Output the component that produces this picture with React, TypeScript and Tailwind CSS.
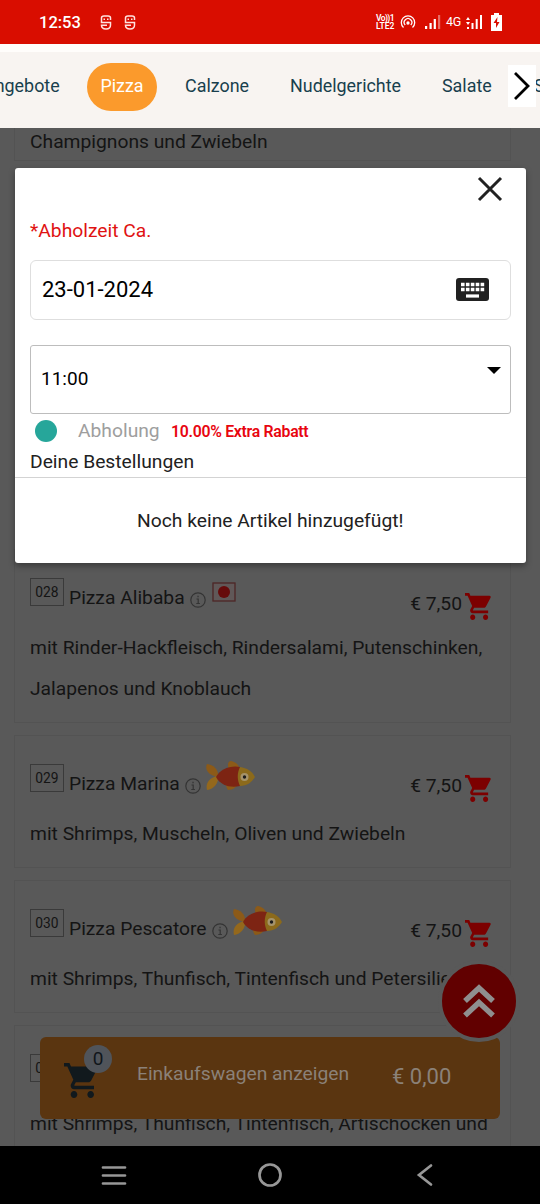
import React from 'react';

type Pizza = {
  number: string;
  name: string;
  price: string;
  description: string[];
  icon: 'flag' | 'fish';
};

const pizzas: Pizza[] = [
  {
    number: '028',
    name: 'Pizza Alibaba',
    price: '€ 7,50',
    description: ['mit Rinder-Hackfleisch, Rindersalami, Putenschinken,', 'Jalapenos und Knoblauch'],
    icon: 'flag',
  },
  {
    number: '029',
    name: 'Pizza Marina',
    price: '€ 7,50',
    description: ['mit Shrimps, Muscheln, Oliven und Zwiebeln'],
    icon: 'fish',
  },
  {
    number: '030',
    name: 'Pizza Pescatore',
    price: '€ 7,50',
    description: ['mit Shrimps, Thunfisch, Tintenfisch und Petersilie'],
    icon: 'fish',
  },
  {
    number: '031',
    name: '',
    price: '',
    description: ['mit Shrimps, Thunfisch, Tintenfisch, Artischocken und'],
    icon: 'fish',
  },
];

const CartIcon = ({ className }: { className: string }) => (
  <svg viewBox="1 2 21 20" className={className} fill="currentColor" preserveAspectRatio="none">
    <path d="M7 18c-1.1 0-1.99.9-1.99 2S5.9 22 7 22s2-.9 2-2-.9-2-2-2zM1 2v2h2l3.6 7.59-1.35 2.45c-.16.28-.25.61-.25.96 0 1.1.9 2 2 2h12v-2H7.42c-.14 0-.25-.11-.25-.25l.03-.12.9-1.63h7.45c.75 0 1.41-.41 1.75-1.03l3.58-6.49A1 1 0 0 0 20 4H5.21l-.94-2H1zm16 16c-1.1 0-1.99.9-1.99 2s.89 2 1.99 2 2-.9 2-2-.9-2-2-2z" />
  </svg>
);

const InfoIcon = () => (
  <svg viewBox="0 0 16 16" className="h-4 w-4" fill="none" stroke="#343434" strokeWidth="1.2">
    <circle cx="8" cy="8" r="7.2" />
    <path d="M6.500 7h1.700v4.300M6.300 11.500h3.600" />
    <path d="M7.400 4.500h1.300" strokeWidth="1.5" />
  </svg>
);

const FishIcon = () => (
  <svg viewBox="0 0 50 32" className="h-8 w-[50px]">
    <path d="M24 9C22 5 23 1 26 1c5 1 8 4 9 9z" fill="#8c5a18" />
    <path d="M13 17C5 16-1 10 2 4c7 1 12 6 11 13z" fill="#8c5a18" />
    <path d="M13 16C5 17 0 23 2 30c7-1 12-7 11-14z" fill="#94681c" />
    <path d="M21 24c0 3 1 5 2 6 5 0 8-3 10-6z" fill="#8c5a18" />
    <path d="M11 17C15 9 26 5 35 7v19c-9 2-19 0-24-9z" fill="#7d2413" />
    <path d="M35 7c7 1 12 4 15 10-3 5-8 9-15 9-3-6-3-13 0-19z" fill="#8c6a1b" />
    <circle cx="39.5" cy="17" r="4" fill="#a5936b" />
    <circle cx="39.5" cy="17" r="1.700" fill="#1c1c1c" />
  </svg>
);

const FlagIcon = () => (
  <svg viewBox="0 0 24 20" className="h-5 w-6">
    <rect x="1" y="1" width="22" height="18" fill="#605858" stroke="#4d2626" strokeWidth="1.3" />
    <circle cx="12" cy="10" r="6" fill="#660b0b" />
  </svg>
);

const StatusBar = () => (
  <div className="flex h-11 items-center bg-[#d90d00] pl-[39px] text-white">
    <span className="w-[61px] pt-0.5 text-[16.5px] font-medium">12:53</span>
    {[0, 1].map((item) => (
      <svg key={item} viewBox="0 0 12 15" className="mr-3 h-[15px] w-3" fill="none" stroke="#ffe3df" strokeWidth="1.5">
        <path d="M10.500 5V3Q10.500 1 8 1H4Q1.500 1 1.500 3v4.500H10.500V10Q10.500 14 6 14 1.500 14 1.500 10.300H7" />
        <path d="M3.500 4.300h1.500M7 4.300h1.500" />
      </svg>
    ))}
    <div className="ml-auto flex h-5 items-center pr-[38px]">
      <div className="w-[20px] text-[8.5px] leading-[8px] font-semibold">
        <div className="tracking-[-0.6px]">Vo))1</div>
        <div>LTE2</div>
      </div>
      <svg viewBox="0 0 16 14" className="ml-[4px] h-[14px] w-4" fill="none" stroke="white" strokeWidth="1.3">
        <path d="M3.500 12.500A6.700 6.700 0 1 1 12.500 12.500M5.200 10A3.800 3.800 0 1 1 10.800 10" />
        <circle cx="8" cy="8" r="1" fill="white" />
      </svg>
      <svg viewBox="0 0 16 14" className="ml-[9px] h-[14px] w-4" fill="white">
        <path d="M0 11h2.200v3H0zM4.500 8h2.200v6H4.500zM8.700 4h2.200v10H8.700z" />
        <path d="M13 0h2.200v14H13z" opacity=".4" />
      </svg>
      <span className="ml-[5px] w-[16px] pt-px text-[12.5px] tracking-[-0.3px]">4G</span>
      <svg viewBox="0 0 17 14" className="ml-[4px] h-[14px] w-[17px]" fill="white">
        <path d="M0 5l2-3 2 3zM0 7l2 3 2-3zM1 12h2v2H1zM5.500 8h2v6h-2zM9.700 4h2v10h-2zM14 0h2v14h-2z" />
      </svg>
      <svg viewBox="0 0 11 18" className="ml-[8px] h-[18px] w-[11px]">
        <path d="M3 0h5v2h3v16H0V2h3z" fill="white" />
        <path d="M6.500 4L2.500 10h2.500v5L8.500 9H6z" fill="#d90d00" />
      </svg>
    </div>
  </div>
);

const CategoryNav = () => (
  <nav className="relative h-[84px] overflow-hidden border-t-8 border-[#fffdfb] bg-[#f8f4f1] text-[17.9px] text-[#183f4d]">
    <div className="flex h-[69px] w-[640px] items-center whitespace-nowrap">
      <span className="-ml-[17px] w-[76px]">Angebote</span>
      <span className="ml-[28px] flex h-12 w-[70px] items-center justify-center rounded-full bg-[#fb9a2c] text-white">Pizza</span>
      <span className="ml-[28px] w-[105px]">Calzone</span>
      <span className="w-[152px]">Nudelgerichte</span>
      <span className="w-[92px]">Salate</span>
      <span>Suppen</span>
    </div>
    <div className="absolute top-[13px] left-[508px] flex h-[42px] w-7 items-center justify-center bg-white">
      <svg viewBox="0 0 16 30" className="h-[30px] w-4" fill="none" stroke="black" strokeWidth="2.8">
        <path d="M1 2L14 15 1 28" />
      </svg>
    </div>
  </nav>
);

const PizzaCard = ({ pizza }: { pizza: Pizza }) => (
  <div className="mb-3 border border-[#535353] pr-[18px] pb-[13px] pl-[15px]">
    <div className="flex h-[77px] items-start">
      <span className="mt-[28px] flex h-7 w-[34px] items-center justify-center border border-[#3a3a3a] text-[13.8px]">
        {pizza.number}
      </span>
      <span className="mt-[34px] ml-[5px] leading-7">{pizza.name}</span>
      <span className="mt-[42px] ml-[5px]">
        <InfoIcon />
      </span>
      {pizza.icon === 'fish' ? (
        <span className="mt-[24px] ml-[4px]"><FishIcon /></span>
      ) : (
        <span className="mt-[32px] ml-[6px]"><FlagIcon /></span>
      )}
      {/* The flag row pushes the price a little lower */}
      <div className={pizza.icon === 'flag' ? 'mt-[4px] ml-auto flex' : 'ml-auto flex'}>
        <span className="mt-[36px] leading-7">{pizza.price}</span>
        <CartIcon className="mt-[39px] ml-[3px] h-[27px] w-[27px] text-[#7c0000]" />
      </div>
    </div>
    {pizza.description.map((line) => (
      <p key={line} className="leading-[41px] whitespace-nowrap">{line}</p>
    ))}
  </div>
);

const PickupDialog = () => (
  <div className="absolute top-[40px] left-[15px] h-[395px] w-[510.5px] rounded-[3px] bg-white text-[#212121] shadow-[0_3px_6px_rgba(0,0,0,0.35)]">
    <div className="flex h-[42px] justify-end pt-2 pr-[23px]">
      <svg viewBox="0 0 26 26" className="h-[26px] w-[26px]" fill="none" stroke="#212121" strokeWidth="3">
        <path d="M2 2L24 24M24 2L2 24" />
      </svg>
    </div>
    <div className="px-[15px]">
      <p className="h-[50px] leading-[42px] text-[#e01212]">*Abholzeit Ca.</p>
      {/* Date */}
      <div className="flex h-[60px] items-center justify-between rounded-md border border-[#dedede] pr-[21px] pb-0.5 pl-[11px] text-[22px] text-black">
        23-01-2024
        <svg viewBox="0 0 33 23" className="h-[23px] w-[33px]">
          <rect width="33" height="23" rx="3" fill="#212121" />
          <path d="M5 6.500h24M5 11.500h24" stroke="white" strokeWidth="3.400" strokeDasharray="3.600 1.300" />
          <path d="M10 18h13" stroke="white" strokeWidth="3.200" />
        </svg>
      </div>
      {/* Time */}
      <div className="mt-[25px] flex h-[69px] items-center justify-between rounded-[3px] border border-[#bdbdbd] pr-[9px] pl-[10px] text-[19px] text-black">
        11:00
        <svg viewBox="0 0 14 7" className="mb-[18px] h-[7px] w-[14px]">
          <path d="M0 0h14L7 7z" />
        </svg>
      </div>
      <div className="flex h-8 items-center pt-px pl-[5px]">
        <span className="h-[22px] w-[22px] rounded-full bg-[#26a69a]" />
        <span className="ml-[21px] w-[93px] pt-px text-[#9e9e9e]">Abholung</span>
        <span className="pt-0.5 text-[15.8px] font-semibold tracking-[-0.28px] text-[#e8050f]">10.00% Extra Rabatt</span>
      </div>
      <p className="h-[31px] leading-8">Deine Bestellungen</p>
    </div>
    <p className="flex h-[86px] items-center justify-center border-t border-[#d3d3d3] pt-0.5">Noch keine Artikel hinzugefügt!</p>
  </div>
);

const CartBar = () => (
  <div className="absolute top-[909px] left-[40px] flex h-[82px] w-[460px] rounded-md bg-[#5a3510] text-[#8b8178]">
    <div className="relative w-[97px]">
      <CartIcon className="mt-[26px] ml-[24px] h-[35px] w-[35px] text-[#11191d]" />
      <span className="absolute top-[8px] left-[44px] flex h-7 w-7 items-center justify-center rounded-full bg-[#50545a] text-[19px] text-[#10161a]">
        0
      </span>
    </div>
    <span className="w-[255px] leading-[74px]">Einkaufswagen anzeigen</span>
    <span className="text-[22px] leading-[80px]">€ 0,00</span>
  </div>
);

const BottomNav = () => (
  <div className="flex h-[58px] items-center bg-black">
    <svg viewBox="0 0 540 58" className="h-[58px] w-full" fill="none" stroke="#979797" strokeWidth="2.700" strokeLinecap="round">
      <path d="M103 21.500h22M103 29.500h22M103 37.500h22" />
      <circle cx="270" cy="29" r="10.500" />
      <path d="M431 19.500L419 29l12 9.500" />
    </svg>
  </div>
);

const App = () => {
  return (
    <div className="h-[1204px] w-[540px] overflow-hidden font-[Roboto,sans-serif] text-[19.25px]">
      <StatusBar />
      <CategoryNav />
      <main className="relative h-[1018px] overflow-hidden bg-[#595959] text-[#141414]">
        <div className="w-[511px] pl-[14px]">
          <div className="mb-[388px] h-[33px] border-x border-b border-[#535353] pl-[15px]">
            <p className="leading-[27px]">Champignons und Zwiebeln</p>
          </div>
          {pizzas.map((pizza) => (
            <PizzaCard key={pizza.number} pizza={pizza} />
          ))}
        </div>
        <CartBar />
        {/* Back to top */}
        <div className="absolute top-[832px] left-[438px] flex h-[82px] w-[82px] items-center justify-center rounded-full border-4 border-[#595959] bg-[#610000]">
          <svg viewBox="0 0 32 36" className="h-9 w-8" fill="none" stroke="#8f8f8f" strokeWidth="5.500">
            <path d="M2 18L16 5l14 13M2 32.500L16 19.500l14 13" />
          </svg>
        </div>
        <PickupDialog />
      </main>
      <BottomNav />
    </div>
  );
};

export default App;
